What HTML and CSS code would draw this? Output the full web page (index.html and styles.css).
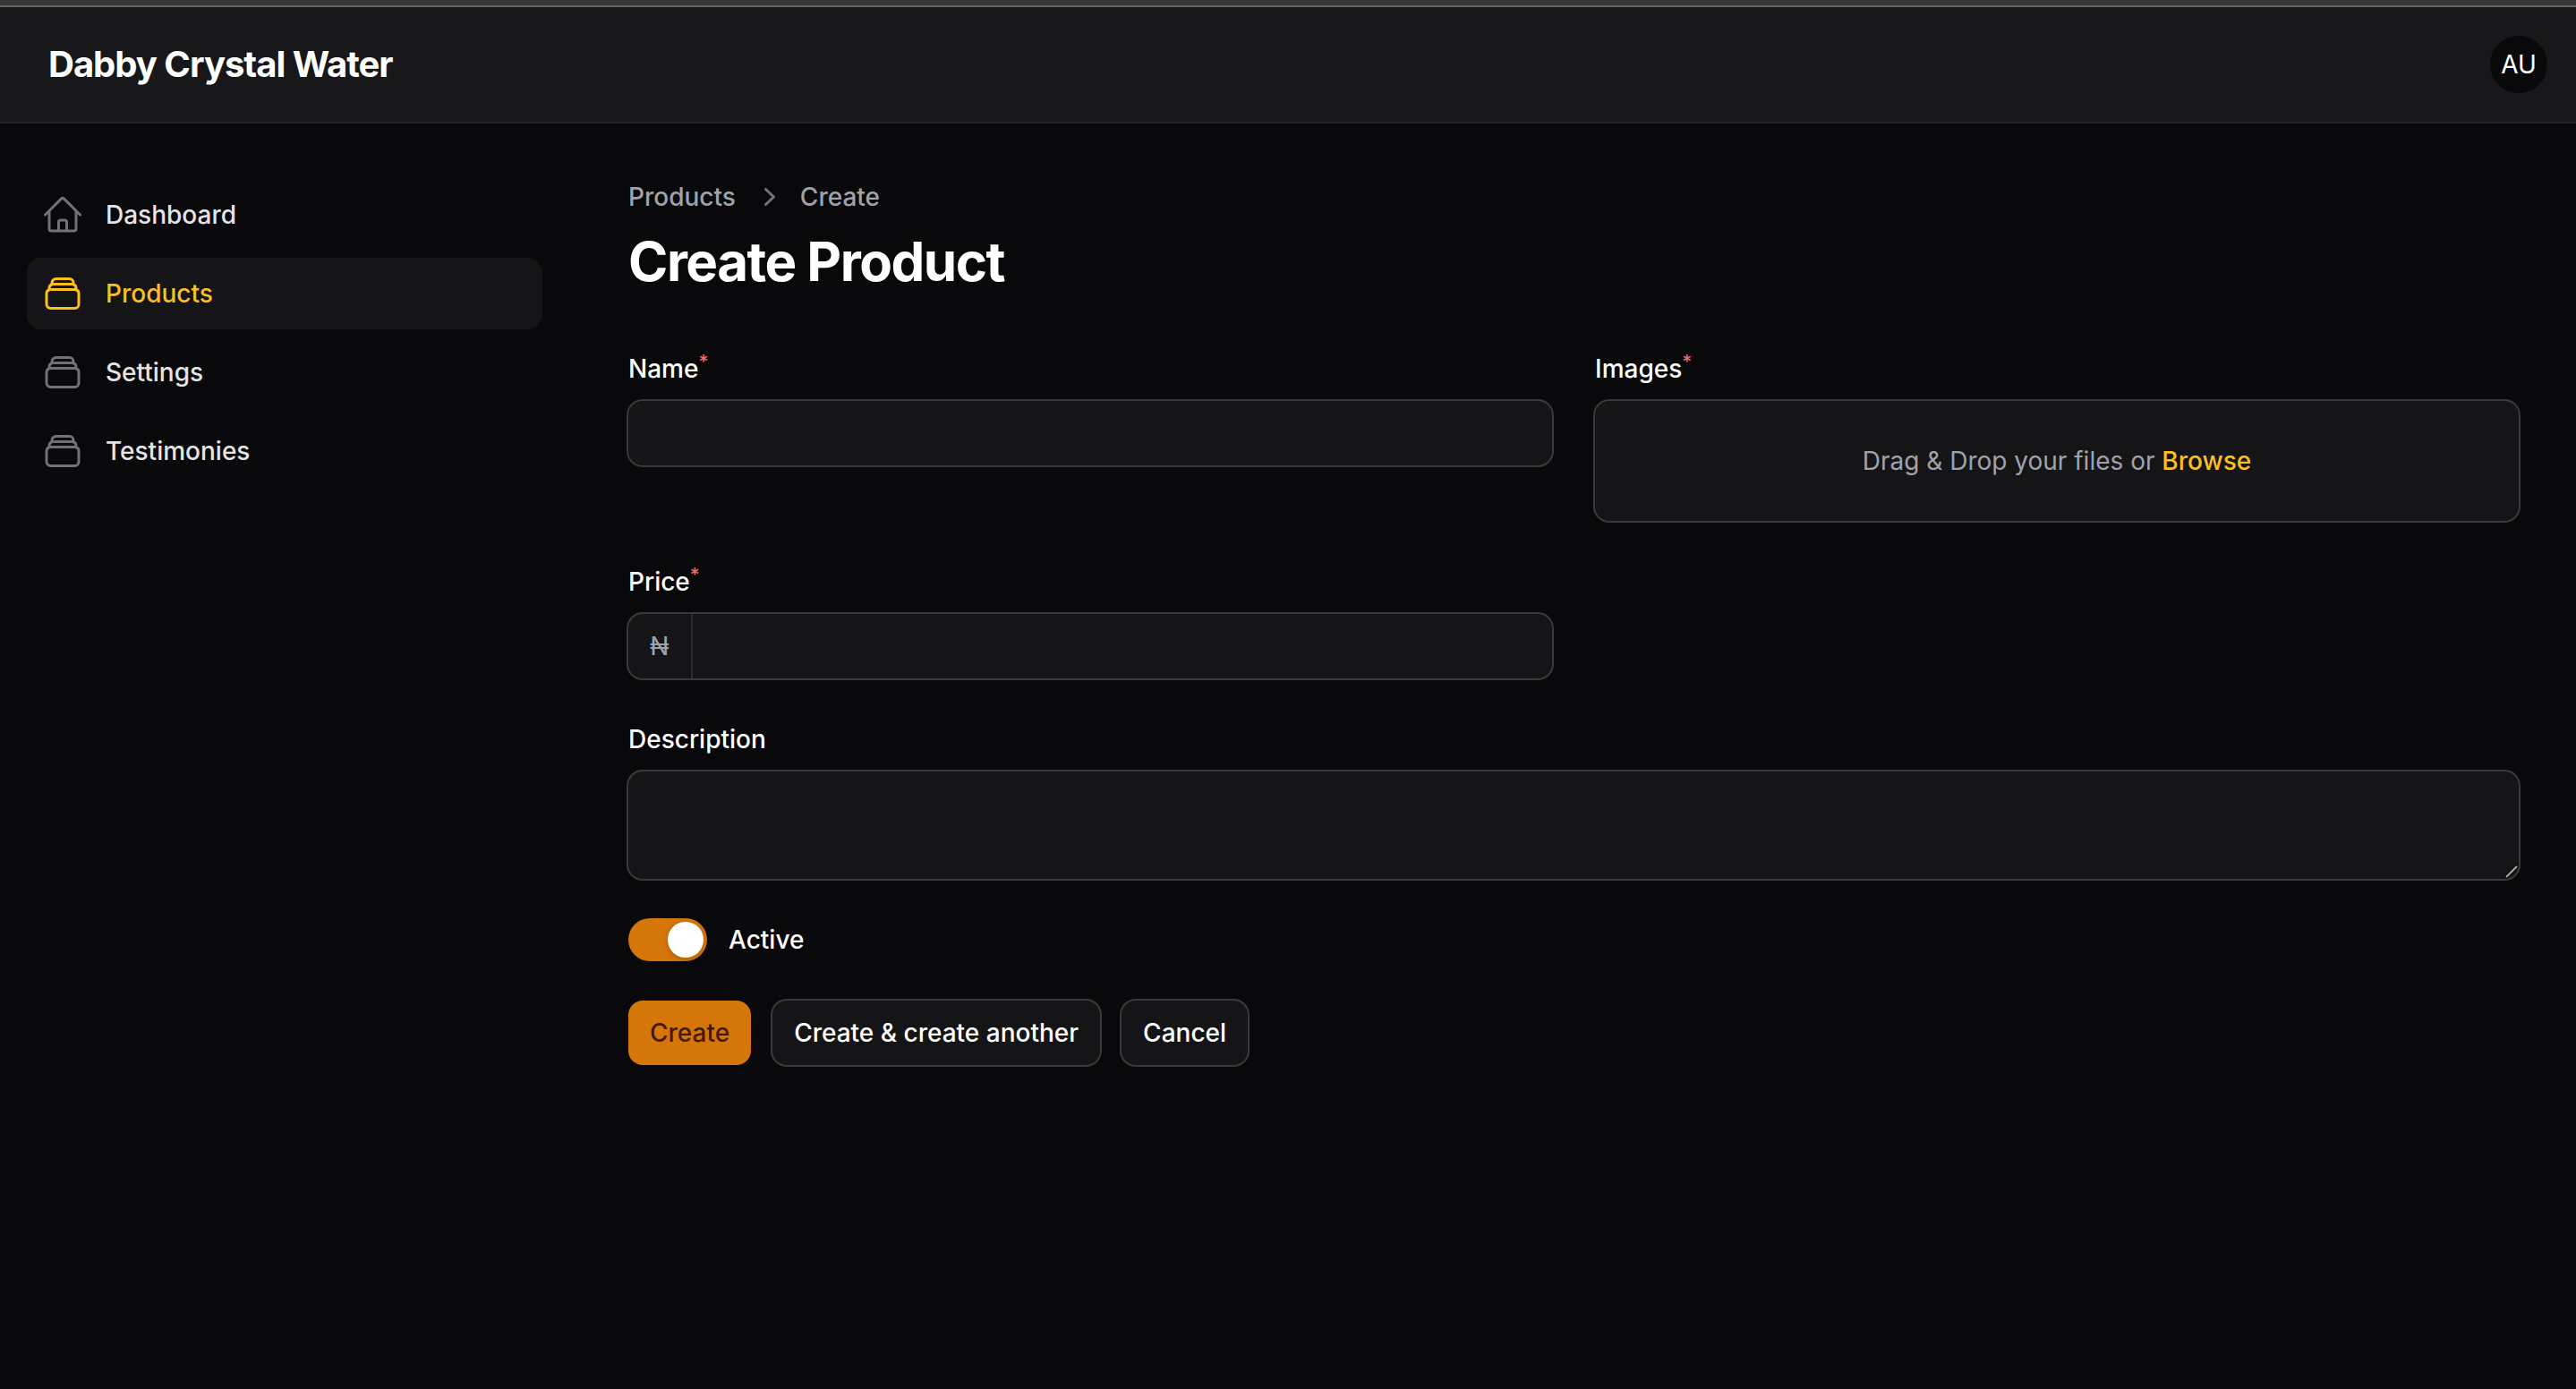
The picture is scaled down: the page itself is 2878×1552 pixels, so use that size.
FILE: index.html
```html
<!DOCTYPE html>
<html lang="en" class="page">
<head>
<meta charset="utf-8">
<title>Create Product - Dabby Crystal Water</title>
<link rel="stylesheet" href="styles.css">
</head>
<body class="app">
<svg class="sprite" aria-hidden="true">
  <symbol id="icon-home" viewBox="0 0 24 24"><path d="m2.25 12 8.954-8.955c.44-.439 1.152-.439 1.591 0L21.75 12M4.5 9.75v10.125c0 .621.504 1.125 1.125 1.125H9.75v-4.875c0-.621.504-1.125 1.125-1.125h2.25c.621 0 1.125.504 1.125 1.125V21h4.125c.621 0 1.125-.504 1.125-1.125V9.75M8.25 21h8.25"/></symbol>
  <symbol id="icon-stack" viewBox="0 0 24 24"><path d="M6 6.878V6a2.25 2.25 0 0 1 2.25-2.25h7.5A2.25 2.25 0 0 1 18 6v.878m-12 0c.235-.083.487-.128.75-.128h10.5c.263 0 .515.045.75.128m-12 0A2.25 2.25 0 0 0 4.5 9v.878m13.5-3A2.25 2.25 0 0 1 19.5 9v.878m0 0a2.246 2.246 0 0 0-.75-.128H5.25c-.263 0-.515.045-.75.128m15 0A2.25 2.25 0 0 1 21 12v6a2.25 2.25 0 0 1-2.25 2.25H5.25A2.25 2.25 0 0 1 3 18v-6c0-.98.626-1.813 1.5-2.122"/></symbol>
</svg>
<div class="window-edge"></div>
<header class="topbar">
  <div class="brand">Dabby Crystal Water</div>
  <div class="avatar">AU</div>
</header>
<div class="layout">
  <nav class="sidebar">
    <a class="nav-item"><svg class="nav-icon"><use href="#icon-home"/></svg><span>Dashboard</span></a>
    <a class="nav-item nav-item-active"><svg class="nav-icon"><use href="#icon-stack"/></svg><span>Products</span></a>
    <a class="nav-item"><svg class="nav-icon"><use href="#icon-stack"/></svg><span>Settings</span></a>
    <a class="nav-item"><svg class="nav-icon"><use href="#icon-stack"/></svg><span>Testimonies</span></a>
  </nav>
  <main class="main">
    <div class="breadcrumbs">
      <a>Products</a>
      <svg class="crumb-icon" viewBox="0 0 20 20"><path fill-rule="evenodd" clip-rule="evenodd" d="M7.21 14.77a.75.75 0 0 1 .02-1.06L11.168 10 7.23 6.29a.75.75 0 1 1 1.04-1.08l4.5 4.25a.75.75 0 0 1 0 1.08l-4.5 4.25a.75.75 0 0 1-1.06-.02Z"/></svg>
      <a>Create</a>
    </div>
    <h1 class="title">Create Product</h1>
    <form class="form">
      <div class="field">
        <label class="label">Name<sup class="required">*</sup></label>
        <input class="control" type="text">
      </div>
      <div class="field">
        <label class="label">Images<sup class="required">*</sup></label>
        <div class="control upload"><span>Drag &amp; Drop your files or <a class="browse">Browse</a></span></div>
      </div>
      <div class="field">
        <label class="label">Price<sup class="required">*</sup></label>
        <div class="control price"><span class="prefix">₦</span><input class="bare" type="text"></div>
      </div>
      <div class="field field-wide">
        <label class="label">Description</label>
        <div class="control description">
          <textarea class="bare"></textarea>
          <svg class="resizer" viewBox="0 0 16 16"><path class="resizer-shade" d="M1.5 14.5 14.5 1.5"/><path class="resizer-line" d="M2 14 14 2"/></svg>
        </div>
      </div>
    </form>
    <div class="toggle-row"><span class="toggle"><span class="knob"></span></span><span>Active</span></div>
    <div class="actions">
      <button class="button button-primary">Create</button>
      <button class="button">Create &amp; create another</button>
      <button class="button">Cancel</button>
    </div>
  </main>
</div>
</body>
</html>
```
FILE: styles.css
```css
.page { background: #09090b; }
.app { margin: 0; min-height: 1552px; background: #09090b; color: #fff; font: 500 28px/40px Inter, "Liberation Sans", sans-serif; }
.sprite { display: none; }
.window-edge { height: 6px; background: #373737; border-bottom: 2px solid #666; }
.topbar { display: flex; align-items: center; justify-content: space-between; height: 128px; padding: 0 32px 0 54px; background: #18181b; border-bottom: 2px solid #222225; }
.brand { font-size: 40px; font-weight: 700; line-height: 40px; letter-spacing: -1px; }
.avatar { width: 64px; height: 64px; border-radius: 50%; background: #09090b; font-weight: 400; text-align: center; line-height: 64px; }
.layout { display: flex; }
.sidebar { display: flex; flex-direction: column; gap: 8px; width: 576px; padding: 62px 32px 0 30px; }
.nav-item { display: flex; align-items: center; gap: 24px; padding: 16px; border-radius: 16px; color: #e4e4e7; }
.nav-icon { width: 48px; height: 48px; fill: none; stroke: #71717a; stroke-width: 1.5; stroke-linecap: round; stroke-linejoin: round; }
.nav-item-active { background: #151517; color: #fbbf24; }
.nav-item-active .nav-icon { stroke: #fbbf24; }
.main { flex: 1; padding: 62px 64px 0; }
.breadcrumbs { display: flex; gap: 16px; color: #a1a1aa; }
.crumb-icon { width: 40px; height: 40px; margin: 0 -2px 0 2px; fill: #71717a; }
.title { margin: 16px 0 64px; font-size: 60px; font-weight: 700; line-height: 72px; letter-spacing: -1.5px; }
.form { display: grid; grid-template-columns: 1fr 1fr; gap: 48px; }
.field { display: flex; flex-direction: column; gap: 16px; }
.field-wide { grid-column: 1 / -1; }
.label { height: 40px; }
.required { font-size: 21px; line-height: 0; color: #ef6c6c; vertical-align: baseline; position: relative; top: -10px; }
.control { box-sizing: border-box; height: 72px; padding: 0; border: 0; border-radius: 16px; background: #151517; box-shadow: 0 0 0 2px #3a3a3c; }
.upload { display: flex; align-items: center; justify-content: center; height: 134px; color: #a1a1aa; font-weight: 400; }
.browse { color: #fbbf24; font-weight: 500; }
.price { display: flex; }
.prefix { padding: 16px 24px; border-right: 2px solid #2c2c2e; color: #a1a1aa; font-weight: 400; }
.bare { flex: 1; padding: 0; border: 0; background: none; resize: none; }
.description { display: flex; position: relative; height: 120px; }
.resizer { position: absolute; right: 0; bottom: 0; width: 16px; height: 16px; fill: none; }
.resizer-shade { stroke: #09090b; stroke-width: 4; }
.resizer-line { stroke: #adadad; stroke-width: 2; }
.toggle-row { display: flex; align-items: center; gap: 24px; margin-top: 44px; }
.toggle { display: flex; justify-content: flex-end; box-sizing: border-box; width: 88px; height: 48px; padding: 4px; border-radius: 24px; background: #d4760a; }
.knob { width: 40px; height: 40px; border-radius: 50%; background: #fff; box-shadow: 0 2px 6px rgba(0, 0, 0, .2); }
.actions { display: flex; gap: 24px; margin-top: 44px; }
.button { height: 72px; padding: 0 24px; border: 0; border-radius: 16px; background: #151517; box-shadow: 0 0 0 2px #3a3a3c; color: #fff; font: inherit; }
.button-primary { background: #d4760a; box-shadow: none; color: #451a03; }
```
